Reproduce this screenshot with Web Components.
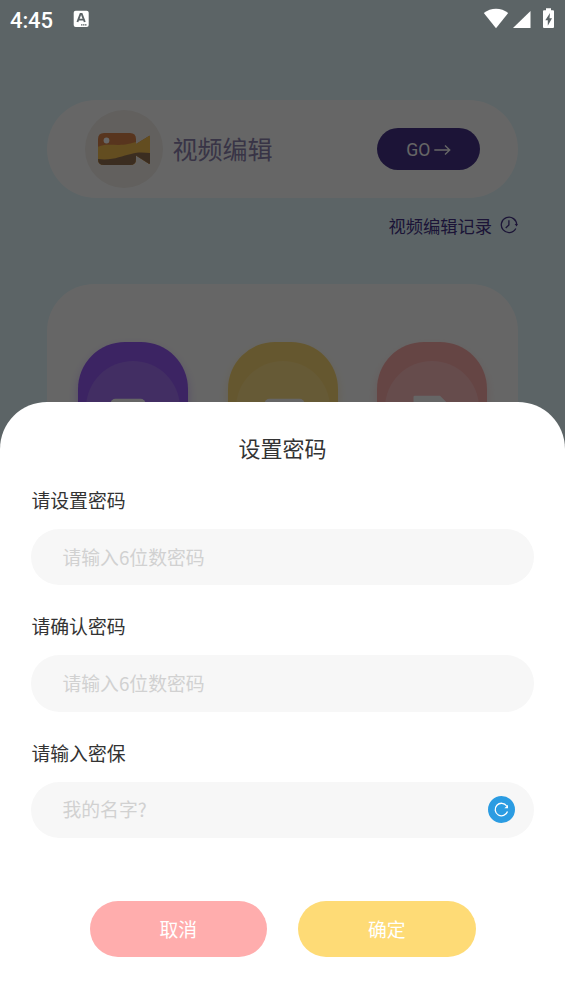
<!DOCTYPE html>
<html lang="zh-CN">
<head>
<meta charset="utf-8">
<title>设置密码</title>
<style>
html,body{margin:0;height:100%;overflow:hidden}
body{font-family:Roboto,"Noto Sans CJK SC",sans-serif;color:#333}
</style>
</head>
<body>
<password-screen></password-screen>
<script>
const define = (name, html) => customElements.define(name, class extends HTMLElement {
  constructor() {
    super();
    const t = document.createElement('template');
    t.innerHTML = html;
    this.attachShadow({mode: 'open'}).appendChild(t.content.cloneNode(true));
  }
});

define('status-bar', `
<style>
:host{display:flex;align-items:center;height:38px;padding:0 10px;box-sizing:border-box;color:#fff}
span{font-size:22px;line-height:38px;font-weight:500;padding-top:3px;width:63px;letter-spacing:-.1px}
svg{display:block}
.right{margin-left:auto}
</style>
<span>4:45</span>
<svg width="17" height="18" viewBox="0 0 17 18"><rect x=".7" y=".7" width="15" height="16.3" rx="2" fill="#fff"/><path d="M4.400 12 7.500 4h1.200L11.800 12M5.700 9.600h4.900" fill="none" stroke="#5b6366" stroke-width="1.900"/><path d="M8 14.800h6" stroke="#5b6366" stroke-width="1.200" stroke-dasharray="1.5 .5"/></svg>
<svg class="right" width="72" height="24" viewBox="0 0 72 24" fill="#fff"><path d="M.8 6.1C7.8.2 18.2.2 25.2 6.1L13 21.2Z"/><path d="M47.500 4v17H30Z"/><path d="M63 1.200h5v2h2q1 0 1 1V20q0 1-1 1h-9q-1 0-1-1V4.200q0-1 1-1h2Z"/><path d="M67 6 62.300 13.200h2.500v5.500L69 11.300h-2.500Z" fill="#5b6366"/></svg>
`);

define('edit-card', `
<style>
:host{display:flex;align-items:center;height:98px;box-sizing:border-box;padding:0 38px;background:#fff;border-radius:49px}
.icon{width:78px;height:78px;border-radius:50%;background:#f4f0eb;display:grid;place-items:center;margin-right:9.500px}
.name{font-size:25px;line-height:36px;color:#8d82ae;padding-top:3px}
.go{margin-left:auto;width:103.500px;height:42px;border-radius:21px;background:#463489;color:#fff;display:flex;align-items:center;justify-content:center;gap:4px;font-size:17.600px;box-sizing:border-box;padding-top:2px;padding-left:1px}
svg{display:block}
</style>
<div class="icon"><svg width="54" height="34" viewBox="0 0 54 34">
<defs><clipPath id="camera"><path d="M7 1h26q6 0 6 6v5L52 4q1-.5 1 .8v26q0 1.700-1.500.8L39 23.500V27q0 6-6 6H7q-6 0-6-6V7Q1 1 7 1Z"/></clipPath></defs>
<g clip-path="url(#camera)"><path d="M0 0h54v34H0Z" fill="#dd864b"/><path d="M0 15C13 10 20 16 39 10L54 1v33H0Z" fill="#f7c051"/><path d="M0 27C16 29 24 24 34 22 43 19.500 48 21 54 21v13H0Z" fill="#957150"/></g>
<circle cx="9.500" cy="8.500" r="2.900" fill="#fff"/></svg></div>
<div class="name">视频编辑</div>
<div class="go"><span>GO</span><svg width="17" height="12" viewBox="0 0 17 12" fill="none" stroke="#fff" stroke-width="1.400"><path d="M.3 6H15.700M11 1.500 15.700 6 11 10.500"/></svg></div>
`);

define('history-link', `
<style>
:host{display:flex;justify-content:flex-end;align-items:center;height:26px;color:#463489;font-size:17.250px;line-height:26px;gap:8px}
span{padding-top:2px}
svg{display:block;margin-top:-2px}
</style>
<span>视频编辑记录</span>
<svg width="18" height="18" viewBox="0 0 18 18" fill="none" stroke="#463489" stroke-width="1.300"><path d="M15.800 12.500A7.700 7.700 0 1 1 16.700 9M8.900 4.300V9L5.700 12"/><path d="M14.600 8h3.200l-1.100 2.500Z" fill="#463489" stroke="none"/></svg>
`);

define('tool-tile', `
<style>
:host{display:flex;justify-content:center;width:110px;height:110px;box-sizing:border-box;padding-top:19px;border-radius:47px;background:var(--tone);box-shadow:0 5px 10px color-mix(in srgb,var(--tone) 40%,transparent)}
div{width:94px;height:94px;border-radius:50%;background:var(--inner)}
::slotted(svg){display:block}
</style>
<div><slot></slot></div>
`);

define('tool-panel', `
<style>
:host{display:flex;justify-content:space-between;box-sizing:border-box;height:400px;padding:58px 31.400px 0;background:#fff;border-radius:47px}
</style>
<tool-tile style="--tone:#965af7;--inner:#a573f7"><svg width="94" height="94"><rect x="24.500" y="37.800" width="35" height="28" rx="5" fill="#fff"/></svg></tool-tile>
<tool-tile style="--tone:#fdda75;--inner:#ffe088"><svg width="94" height="94"><rect x="28.500" y="37.800" width="40" height="28" rx="5" fill="#fff"/></svg></tool-tile>
<tool-tile style="--tone:#fdadaa;--inner:#ffbdbf"><svg width="94" height="94"><path d="M28.500 36q0-1.200 1.200-1.200H55l7 7V72H28.500Z" fill="#fff"/></svg></tool-tile>
`);

define('form-field', `
<style>
:host{display:block;height:126.250px}
.label{font-size:18.830px;line-height:28px;height:41px}
.box{height:56.400px;border-radius:28.200px;background:#f7f7f7;display:flex;align-items:center;justify-content:space-between;box-sizing:border-box;padding:0 18.500px 0 31px;color:#d1d1d1;font-family:"Noto Sans CJK SC",sans-serif;font-size:18.830px}
.value{line-height:28px;padding-bottom:1px}
</style>
<div class="label"><slot name="label"></slot></div>
<div class="box"><span class="value"><slot></slot></span><slot name="action"></slot></div>
`);

define('pill-button', `
<style>
:host{display:flex;align-items:center;justify-content:center;width:177.500px;height:56.500px;border-radius:28.250px;background:var(--fill);color:#fff;font-size:18.830px}
</style><slot></slot>
`);

define('password-sheet', `
<style>
:host{display:block;box-sizing:border-box;background:#fff;border-radius:47px 47px 0 0;padding:32px 31.400px 0}
h1{margin:0 0 21.600px;font-size:22px;font-weight:400;line-height:32px;text-align:center}
.actions{display:flex;justify-content:center;gap:31px;margin-top:33.750px}
svg{display:block}
</style>
<h1>设置密码</h1>
<form-field><span slot="label">请设置密码</span>请输入6位数密码</form-field>
<form-field><span slot="label">请确认密码</span>请输入6位数密码</form-field>
<form-field><span slot="label">请输入密保</span>我的名字?
<svg slot="action" width="27" height="27" viewBox="0 0 27 27"><circle cx="13.500" cy="13.500" r="13.500" fill="#2b9ce2"/><path d="M18.700 10A6.300 6.300 0 1 0 19.500 15.500" fill="none" stroke="#fff" stroke-width="1.300"/><path d="M20 8.700v3.600h-3.600Z" fill="#fff"/></svg></form-field>
<div class="actions"><pill-button style="--fill:#ffadad">取消</pill-button><pill-button style="--fill:#fedb76">确定</pill-button></div>
`);

define('password-screen', `
<style>
:host{display:block;position:relative;width:565px;height:1004px;overflow:hidden}
.page{height:100%;box-sizing:border-box;padding:100px 47px 0;background:#e5fafe}
history-link{margin:15px 0 45px}
.scrim{position:absolute;inset:0;background:rgba(0,0,0,.6);display:flex;flex-direction:column}
password-sheet{margin-top:auto;height:601.600px}
</style>
<div class="page"><edit-card></edit-card><history-link></history-link><tool-panel></tool-panel></div>
<div class="scrim"><status-bar></status-bar><password-sheet></password-sheet></div>
`);
</script>
</body>
</html>
